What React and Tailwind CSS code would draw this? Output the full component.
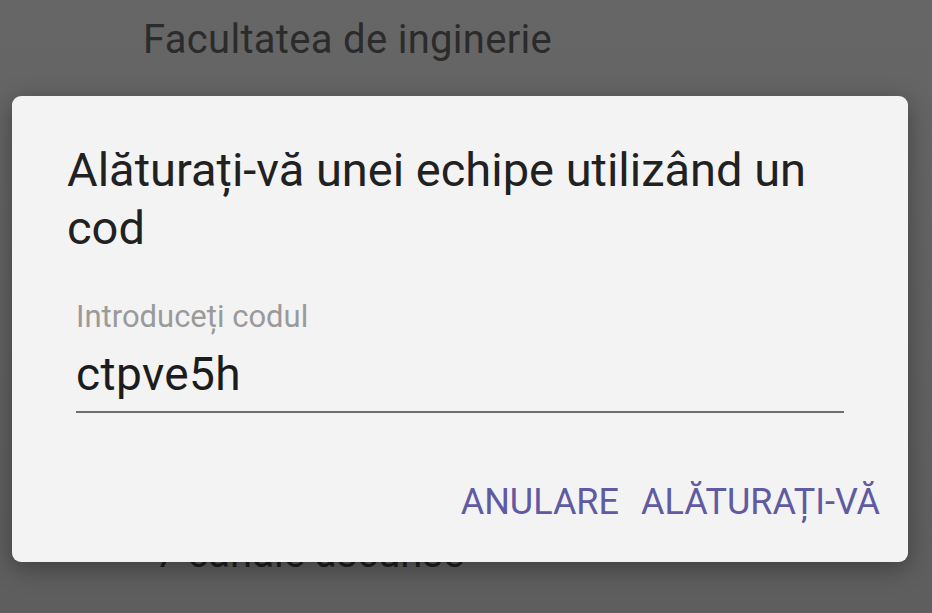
export default function App() {
  return (
    <div className="relative w-[932px] h-[613px] overflow-hidden bg-gradient-to-b from-[#666666] to-[#5e5e5e] font-['Roboto',sans-serif]">
      {/* Page behind the dialog */}
      <div className="flex flex-col pl-[143px] pt-[14px]">
        <h2 className="text-[40px] leading-[52px] tracking-[0.3px] text-[#2b2b2b]">Facultatea de inginerie</h2>
        <p className="mt-[462px] pl-[12px] text-[40px] leading-[52px] text-[#1e1e1e]">7 canale ascunse</p>
      </div>

      {/* Dialog */}
      <div className="absolute left-[12px] top-[96px] w-[896px] h-[466px] rounded-[9px] bg-[#f3f3f3] shadow-[0_6px_24px_rgba(0,0,0,0.35)] flex flex-col">
        <h1 className="pl-[55px] pr-[50px] pt-[45px] text-[47px] leading-[58px] text-[#212121]">
          Alăturați-vă unei echipe utilizând un cod
        </h1>

        <div className="mx-[64px] mt-[42px] flex flex-col">
          <label className="text-[31px] leading-[36px] text-[#9a9a9a]">Introduceți codul</label>
          <div className="mt-[14px] text-[46px] leading-[50px] tracking-[0.4px] text-[#1c1c1c]">ctpve5h</div>
          <div className="mt-[12px] h-[2px] bg-[#6e6e6e]" />
        </div>

        <div className="mt-auto mb-[40px] pr-[28px] flex justify-end gap-[22px] text-[36px] leading-[40px] text-[#5f5aa2]">
          <button>ANULARE</button>
          <button>ALĂTURAȚI-VĂ</button>
        </div>
      </div>
    </div>
  );
}
